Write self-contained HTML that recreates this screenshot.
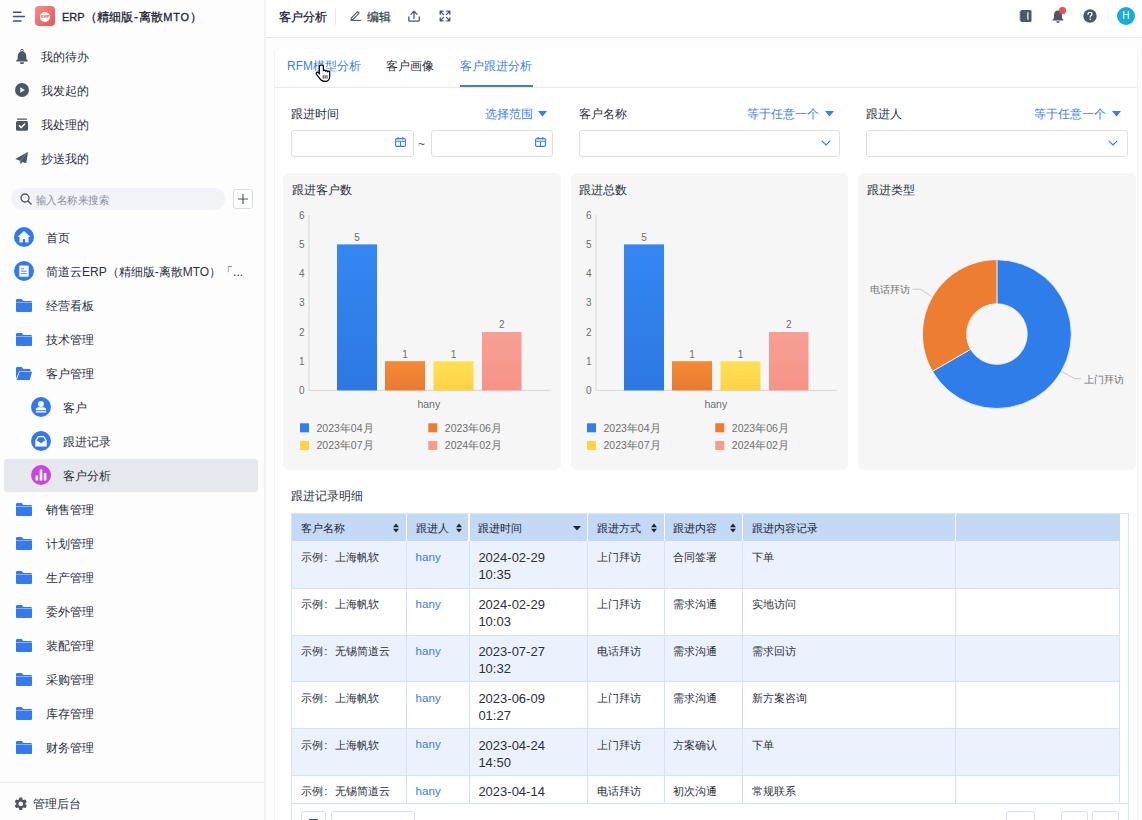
<!DOCTYPE html>
<html><head><meta charset="utf-8">
<style>
*{box-sizing:border-box;margin:0;padding:0}
html,body{width:1142px;height:820px;overflow:hidden;background:#fdfdfd;font-family:"Liberation Sans",sans-serif;color:#1f2329}
.abs{position:absolute}
.t{position:absolute;white-space:nowrap;line-height:14px}
#side{position:absolute;left:0;top:0;width:266px;height:820px;background:#fdfdfd;border-right:2px solid #f2f2f4}
.tx{position:absolute;font-size:12px;line-height:14px;color:#2b303b;white-space:nowrap}
#top{position:absolute;left:266px;top:0;width:876px;height:38px;background:#fff;border-bottom:1px solid #e9e9ec}
#main{position:absolute;left:265px;top:38px;width:877px;height:782px;background:#f7f8fa}

</style></head><body>
<div id="side"></div>
<svg class="abs" style="left:12px;top:11px" width="14" height="12" viewBox="0 0 14 12"><g stroke="#4a5060" stroke-width="1.5" stroke-linecap="round"><line x1="1.5" y1="1.3" x2="9" y2="1.3"/><line x1="1.5" y1="5.6" x2="12.3" y2="5.6"/><line x1="1.5" y1="10" x2="9" y2="10"/></g></svg>
<div class="abs" style="left:35px;top:6px;width:20px;height:20px;border-radius:4px;background:linear-gradient(135deg,#f38d8d,#e55656)"></div>
<div class="abs" style="left:40px;top:11.5px;width:10px;height:10px;border-radius:50%;background:#fff"></div>
<div class="abs" style="left:41.3px;top:14.5px;font-size:4px;line-height:4px;color:#e55;font-weight:bold">ERP</div>
<div class="t" style="left:62px;top:9px;font-size:12.2px;line-height:16px;color:#1f2633;-webkit-text-stroke:.3px #1f2633"><span style="font-size:11px">ERP</span>（精细版<span style="margin:0 1.25px">-</span>离散<span style="font-size:11px;letter-spacing:.8px">MTO</span>）</div>
<svg class="abs" style="left:16px;top:49px" width="12" height="15" viewBox="0 0 12 15"><circle cx="6" cy="1.6" r="1.3" fill="none" stroke="#4e5564" stroke-width="1"/><path d="M6 2.6c-2.6 0-4.3 2-4.3 4.6v3L.2 11.5c-.3.4 0 .9.5.9h10.6c.5 0 .8-.5.5-.9L10.3 10.2v-3C10.3 4.6 8.6 2.6 6 2.6z" fill="#4e5564"/><path d="M4 13.2a2 2 0 0 0 4 0z" fill="#4e5564"/></svg>
<div class="tx" style="left:41px;top:49.5px">我的待办</div>
<svg class="abs" style="left:15px;top:83px" width="14" height="14" viewBox="0 0 14 14"><circle cx="7" cy="7" r="7" fill="#4e5564"/><path d="M5.3 4.2v5.6l4.5-2.8z" fill="#fff"/></svg>
<div class="tx" style="left:41px;top:83.5px">我发起的</div>
<svg class="abs" style="left:16px;top:118px" width="12" height="13" viewBox="0 0 12 13"><rect x="1" y="0.5" width="10" height="1.2" rx=".5" fill="#4e5564"/><rect x="0" y="3" width="12" height="9.8" rx="1.6" fill="#4e5564"/><path d="M3.4 7.8l1.9 1.8 3.4-3.5" fill="none" stroke="#fff" stroke-width="1.5" stroke-linecap="round" stroke-linejoin="round"/></svg>
<div class="tx" style="left:41px;top:117.5px">我处理的</div>
<svg class="abs" style="left:15px;top:151px" width="14" height="14" viewBox="0 0 14 14"><path d="M13.1.8L.3 8.1l4.3 1.4.9 4.1 1.8-2.7 3.9 1.4z" fill="#4e5564"/><path d="M13.1.8L5.4 9.8l.1 3.6" fill="none" stroke="#fff" stroke-width=".5" opacity=".55"/></svg>
<div class="tx" style="left:41px;top:151.5px">抄送我的</div>
<div class="abs" style="left:11px;top:188px;width:214px;height:22px;border-radius:11px;background:#f1f3f7"></div>
<svg class="abs" style="left:20px;top:193px" width="12" height="12" viewBox="0 0 12 12"><circle cx="5" cy="5" r="4" fill="none" stroke="#4e5564" stroke-width="1.3"/><path d="M8 8l3 3" stroke="#4e5564" stroke-width="1.4" stroke-linecap="round"/></svg>
<div class="tx" style="left:36px;top:192.5px;font-size:11px;color:#8c919b;transform:scaleX(.95);transform-origin:0 0">输入名称来搜索</div>
<div class="abs" style="left:233px;top:189px;width:20px;height:20px;border:1px solid #d9dce2;border-radius:3px;background:#fff"></div>
<svg class="abs" style="left:237px;top:193px" width="12" height="12" viewBox="0 0 12 12"><path d="M6 1v10M1 6h10" stroke="#4e5564" stroke-width="1.2"/></svg>
<svg class="abs" style="left:14px;top:227px" width="20" height="20" viewBox="0 0 20 20"><circle cx="10" cy="10" r="10" fill="#3478f0"/><path d="M10 4L3.6 9.8h1.9v5.6h3.3v-3.4h2.4v3.4h3.3V9.8h1.9z" fill="#fff"/></svg>
<div class="tx" style="left:46px;top:230.5px">首页</div>
<svg class="abs" style="left:14px;top:261px" width="20" height="20" viewBox="0 0 20 20"><circle cx="10" cy="10" r="10" fill="#3478f0"/><rect x="5.3" y="4.6" width="9.4" height="11.2" rx="1" fill="#fff"/><path d="M7.2 7.8h3M7.2 10.2h5.4M7.2 12.6h5.4" stroke="#3478f0" stroke-width=".9"/></svg>
<div class="tx" style="left:46px;top:264.5px">简道云ERP（精细版-离散MTO）「...</div>
<svg class="abs" style="left:16px;top:299px" width="16" height="13" viewBox="0 0 16 13"><path d="M1.3 0h4.4l1.7 1.9h7.3c.7 0 1.3.6 1.3 1.3v8.5c0 .7-.6 1.3-1.3 1.3H1.3C.6 13 0 12.4 0 11.7V1.3C0 .6.6 0 1.3 0z" fill="#3479ee"/><path d="M0 3.5h16" stroke="#fff" stroke-width=".6" opacity=".7"/></svg>
<div class="tx" style="left:46px;top:298.5px">经营看板</div>
<svg class="abs" style="left:16px;top:333px" width="16" height="13" viewBox="0 0 16 13"><path d="M1.3 0h4.4l1.7 1.9h7.3c.7 0 1.3.6 1.3 1.3v8.5c0 .7-.6 1.3-1.3 1.3H1.3C.6 13 0 12.4 0 11.7V1.3C0 .6.6 0 1.3 0z" fill="#3479ee"/><path d="M0 3.5h16" stroke="#fff" stroke-width=".6" opacity=".7"/></svg>
<div class="tx" style="left:46px;top:332.5px">技术管理</div>
<svg class="abs" style="left:16px;top:367px" width="16" height="13" viewBox="0 0 16 13"><path d="M1.3 0h4.4l1.7 1.9h6c.7 0 1.3.6 1.3 1.3v1.1H3.3L0 11.8V1.3C0 .6.6 0 1.3 0z" fill="#3479ee"/><path d="M3.7 4.8H16L13.8 13H.6z" fill="#3479ee"/></svg>
<div class="tx" style="left:46px;top:366.5px">客户管理</div>
<svg class="abs" style="left:16px;top:503px" width="16" height="13" viewBox="0 0 16 13"><path d="M1.3 0h4.4l1.7 1.9h7.3c.7 0 1.3.6 1.3 1.3v8.5c0 .7-.6 1.3-1.3 1.3H1.3C.6 13 0 12.4 0 11.7V1.3C0 .6.6 0 1.3 0z" fill="#3479ee"/><path d="M0 3.5h16" stroke="#fff" stroke-width=".6" opacity=".7"/></svg>
<div class="tx" style="left:46px;top:502.5px">销售管理</div>
<svg class="abs" style="left:16px;top:537px" width="16" height="13" viewBox="0 0 16 13"><path d="M1.3 0h4.4l1.7 1.9h7.3c.7 0 1.3.6 1.3 1.3v8.5c0 .7-.6 1.3-1.3 1.3H1.3C.6 13 0 12.4 0 11.7V1.3C0 .6.6 0 1.3 0z" fill="#3479ee"/><path d="M0 3.5h16" stroke="#fff" stroke-width=".6" opacity=".7"/></svg>
<div class="tx" style="left:46px;top:536.5px">计划管理</div>
<svg class="abs" style="left:16px;top:571px" width="16" height="13" viewBox="0 0 16 13"><path d="M1.3 0h4.4l1.7 1.9h7.3c.7 0 1.3.6 1.3 1.3v8.5c0 .7-.6 1.3-1.3 1.3H1.3C.6 13 0 12.4 0 11.7V1.3C0 .6.6 0 1.3 0z" fill="#3479ee"/><path d="M0 3.5h16" stroke="#fff" stroke-width=".6" opacity=".7"/></svg>
<div class="tx" style="left:46px;top:570.5px">生产管理</div>
<svg class="abs" style="left:16px;top:605px" width="16" height="13" viewBox="0 0 16 13"><path d="M1.3 0h4.4l1.7 1.9h7.3c.7 0 1.3.6 1.3 1.3v8.5c0 .7-.6 1.3-1.3 1.3H1.3C.6 13 0 12.4 0 11.7V1.3C0 .6.6 0 1.3 0z" fill="#3479ee"/><path d="M0 3.5h16" stroke="#fff" stroke-width=".6" opacity=".7"/></svg>
<div class="tx" style="left:46px;top:604.5px">委外管理</div>
<svg class="abs" style="left:16px;top:639px" width="16" height="13" viewBox="0 0 16 13"><path d="M1.3 0h4.4l1.7 1.9h7.3c.7 0 1.3.6 1.3 1.3v8.5c0 .7-.6 1.3-1.3 1.3H1.3C.6 13 0 12.4 0 11.7V1.3C0 .6.6 0 1.3 0z" fill="#3479ee"/><path d="M0 3.5h16" stroke="#fff" stroke-width=".6" opacity=".7"/></svg>
<div class="tx" style="left:46px;top:638.5px">装配管理</div>
<svg class="abs" style="left:16px;top:673px" width="16" height="13" viewBox="0 0 16 13"><path d="M1.3 0h4.4l1.7 1.9h7.3c.7 0 1.3.6 1.3 1.3v8.5c0 .7-.6 1.3-1.3 1.3H1.3C.6 13 0 12.4 0 11.7V1.3C0 .6.6 0 1.3 0z" fill="#3479ee"/><path d="M0 3.5h16" stroke="#fff" stroke-width=".6" opacity=".7"/></svg>
<div class="tx" style="left:46px;top:672.5px">采购管理</div>
<svg class="abs" style="left:16px;top:707px" width="16" height="13" viewBox="0 0 16 13"><path d="M1.3 0h4.4l1.7 1.9h7.3c.7 0 1.3.6 1.3 1.3v8.5c0 .7-.6 1.3-1.3 1.3H1.3C.6 13 0 12.4 0 11.7V1.3C0 .6.6 0 1.3 0z" fill="#3479ee"/><path d="M0 3.5h16" stroke="#fff" stroke-width=".6" opacity=".7"/></svg>
<div class="tx" style="left:46px;top:706.5px">库存管理</div>
<svg class="abs" style="left:16px;top:741px" width="16" height="13" viewBox="0 0 16 13"><path d="M1.3 0h4.4l1.7 1.9h7.3c.7 0 1.3.6 1.3 1.3v8.5c0 .7-.6 1.3-1.3 1.3H1.3C.6 13 0 12.4 0 11.7V1.3C0 .6.6 0 1.3 0z" fill="#3479ee"/><path d="M0 3.5h16" stroke="#fff" stroke-width=".6" opacity=".7"/></svg>
<div class="tx" style="left:46px;top:740.5px">财务管理</div>
<div class="abs" style="left:4px;top:459px;width:254px;height:33px;border-radius:3px;background:#e7e8ed"></div>
<svg class="abs" style="left:31px;top:397px" width="20" height="20" viewBox="0 0 20 20"><circle cx="10" cy="10" r="10" fill="#3478f0"/><circle cx="10" cy="7" r="2.9" fill="#fff"/><path d="M4.8 13.2c0-2 1.3-2.9 2.9-2.9h4.6c1.6 0 2.9.9 2.9 2.9z" fill="#fff"/><rect x="4.8" y="14.2" width="10.4" height="1.3" fill="#fff"/></svg>
<div class="tx" style="left:62.5px;top:400.5px">客户</div>
<svg class="abs" style="left:31px;top:431.3px" width="20" height="20" viewBox="0 0 20 20"><circle cx="10" cy="10" r="10" fill="#3478f0"/><path d="M4.3 8.6L10 12.3l5.7-3.7v6.9H4.3z" fill="#fff"/><path d="M5.2 9.1L7.3 5.6h5.4l2.1 3.5" fill="none" stroke="#fff" stroke-width="1.1" stroke-linejoin="round"/></svg>
<div class="tx" style="left:62.5px;top:434.5px">跟进记录</div>
<svg class="abs" style="left:31px;top:465px" width="20" height="20" viewBox="0 0 20 20"><circle cx="10" cy="10" r="10" fill="#c846df"/><rect x="4.6" y="10.6" width="2.6" height="4.8" rx=".5" fill="#fff"/><rect x="8.7" y="4.6" width="2.6" height="10.8" rx=".5" fill="#fff"/><rect x="12.8" y="8" width="2.6" height="7.4" rx=".5" fill="#fff"/></svg>
<div class="tx" style="left:62.5px;top:468.5px">客户分析</div>
<div class="abs" style="left:0;top:782px;width:264px;height:1px;background:#eeeef1"></div>
<svg class="abs" style="left:13.2px;top:796.2px" width="15.5" height="15.5" viewBox="0 0 24 24"><path fill="#4e5564" d="M19.14 12.94c.04-.3.06-.61.06-.94 0-.32-.02-.64-.07-.94l2.03-1.58a.49.49 0 0 0 .12-.61l-1.92-3.32a.488.488 0 0 0-.59-.22l-2.39.96c-.5-.38-1.03-.7-1.62-.94l-.36-2.54a.484.484 0 0 0-.48-.41h-3.840c-.24 0-.43.17-.47.41l-.36 2.54c-.59.24-1.13.57-1.62.94l-2.39-.96c-.22-.08-.47 0-.59.22L2.74 8.87c-.12.21-.08.47.12.61l2.03 1.58c-.05.3-.09.63-.09.94s.02.64.07.94l-2.03 1.58a.49.49 0 0 0-.12.61l1.92 3.32c.12.22.37.29.59.22l2.39-.96c.5.38 1.03.7 1.62.94l.36 2.54c.05.24.24.41.48.41h3.84c.24 0 .44-.17.47-.41l.36-2.54c.59-.24 1.130-.56 1.62-.94l2.39.96c.22.08.47 0 .59-.22l1.92-3.32c.12-.22.07-.47-.12-.61l-2.01-1.58zM12 15.6c-1.98 0-3.6-1.62-3.6-3.6s1.62-3.6 3.6-3.6 3.6 1.62 3.6 3.6-1.62 3.6-3.6 3.6z"/></svg>
<div class="tx" style="left:33px;top:796.5px">管理后台</div><div id="top"></div>
<div class="t" style="left:279px;top:9.5px;font-size:12px;line-height:14px;color:#1f2633;-webkit-text-stroke:.3px #1f2633">客户分析</div>
<div class="abs" style="left:335px;top:8px;width:1px;height:17px;background:#e8e9ec"></div>
<svg class="abs" style="left:350px;top:10px" width="12" height="11" viewBox="0 0 12 11"><path d="M1.2 8.2L7.6 1.6l1.6 1.6-6.4 6.5H1.2z" fill="none" stroke="#4e5564" stroke-width="1.1" stroke-linejoin="round"/><path d="M.6 10.4h10.6" stroke="#4e5564" stroke-width="1.1"/></svg>
<div class="t" style="left:367px;top:9.5px;font-size:12px;line-height:14px;color:#2b303b;-webkit-text-stroke:.15px #2b303b">编辑</div>
<svg class="abs" style="left:408px;top:9.5px" width="12" height="12" viewBox="0 0 12 12"><path d="M6 8.6V1.4M2.9 4.4L6 1.2l3.1 3.2M.8 6.8v3.8c0 .3.2.5.5.5h9.4c.3 0 .5-.2.5-.5V6.8" fill="none" stroke="#4e5564" stroke-width="1.25" stroke-linecap="round" stroke-linejoin="round"/></svg>
<svg class="abs" style="left:438.5px;top:9.5px" width="12" height="12" viewBox="0 0 12 12"><path d="M1.2 4.2V1.2h3M1.2 1.2l3.4 3.4M7.8 1.2h3v3M10.8 1.2L7.4 4.6M10.8 7.8v3h-3M10.8 10.8L7.4 7.4M4.2 10.8h-3v-3M1.2 10.8l3.4-3.4" fill="none" stroke="#4e5564" stroke-width="1.3" stroke-linecap="round" stroke-linejoin="round"/></svg>
<svg class="abs" style="left:1019px;top:10px" width="13" height="12" viewBox="0 0 13 12"><rect x="1.3" y="0" width="11.2" height="12" rx="1.6" fill="#4e5564"/><path d="M.4 2.6h1.6M.4 4.8h1.6M.4 7h1.6M.4 9.2h1.6" stroke="#4e5564" stroke-width=".9"/><rect x="8.3" y="2.3" width="1.2" height="7.4" fill="#fff"/></svg>
<svg class="abs" style="left:1052px;top:9px" width="12" height="14" viewBox="0 0 12 14"><path d="M6 1.4c-2.5 0-4 1.9-4 4.4v3.3L.6 10.8c-.2.4 0 .7.4.7h10c.4 0 .6-.3.4-.7L10 9.1V5.8C10 3.3 8.5 1.4 6 1.4z" fill="#4e5564"/><path d="M4.3 12.2a1.7 1.7 0 0 0 3.4 0z" fill="#4e5564"/></svg>
<div class="abs" style="left:1059px;top:7px;width:6.6px;height:6.6px;border-radius:50%;background:#ea4f4f"></div>
<svg class="abs" style="left:1083px;top:9px" width="14" height="14" viewBox="0 0 14 14"><circle cx="7" cy="7" r="6.7" fill="#4e5564"/><path d="M5 5.3c0-1.1.9-1.9 2-1.9s2 .8 2 1.8c0 1.3-1.8 1.5-1.8 2.7" fill="none" stroke="#fff" stroke-width="1.3" stroke-linecap="round"/><circle cx="7.2" cy="10.2" r=".8" fill="#fff"/></svg>
<div class="abs" style="left:1116.5px;top:6.8px;width:18.6px;height:18.6px;border-radius:50%;background:#17acd6"></div>
<div class="t" style="left:1116.5px;top:10px;width:18.6px;text-align:center;font-size:10px;line-height:12px;color:#fff">H</div><div class="abs" style="left:273.5px;top:50px;width:864.5px;height:790px;background:#fff;border-left:1px solid #f1f1f7;border-right:1px solid #f1f1f7"></div>
<div class="t" style="left:287px;top:59px;font-size:12px;line-height:14px;color:#3d7fe3">RFM模型分析</div>
<div class="t" style="left:386px;top:59px;font-size:12px;line-height:14px;color:#2b303b">客户画像</div>
<div class="t" style="left:460px;top:59px;font-size:12px;line-height:14px;color:#3d7fe3">客户跟进分析</div>
<div class="abs" style="left:460px;top:84.5px;width:73px;height:2.3px;background:#3a7de6"></div>
<div class="abs" style="left:275px;top:87px;width:862px;height:1px;background:#e8e9ed"></div>
<svg class="abs" style="left:314.5px;top:63.5px" width="18" height="19" viewBox="0 0 18 19"><path d="M5.6 1.2c-.8 0-1.3.6-1.3 1.3v7.1l-.9-.9c-.6-.7-1.5-.7-2-.1-.4.5-.3 1.2.1 1.7l3.1 4c1 1.4 2.3 3.1 5.1 3.1h.5c2.6 0 4.5-2 4.5-4.6V8.4c0-.7-.5-1.2-1.2-1.2-.4 0-.7.2-.9.4-.1-.6-.6-1-1.2-1-.4 0-.8.2-1 .4-.2-.5-.6-.9-1.1-.9-.3 0-.6.1-.9.3V2.5c0-.7-.6-1.3-1.3-1.3z" fill="#fff" stroke="#000" stroke-width="1.2"/><path d="M8.2 11.2v3.4M10.1 11.2v3.4M12 11.2v3.4" stroke="#000" stroke-width=".8"/></svg>
<div class="t" style="left:291px;top:106.5px;font-size:12px;line-height:14px;color:#2b303b">跟进时间</div>
<div class="t" style="left:484.5px;top:106.5px;font-size:12px;line-height:14px;color:#3d7fe3">选择范围</div>
<svg class="abs" style="left:538px;top:110.5px" width="9" height="6" viewBox="0 0 9 6"><path d="M0 0h9L4.5 5.5z" fill="#3a7de6"/></svg>
<div class="t" style="left:578.5px;top:106.5px;font-size:12px;line-height:14px;color:#2b303b">客户名称</div>
<div class="t" style="left:747px;top:106.5px;font-size:12px;line-height:14px;color:#3d7fe3">等于任意一个</div>
<svg class="abs" style="left:825px;top:110.5px" width="9" height="6" viewBox="0 0 9 6"><path d="M0 0h9L4.5 5.5z" fill="#3a7de6"/></svg>
<div class="t" style="left:866px;top:106.5px;font-size:12px;line-height:14px;color:#2b303b">跟进人</div>
<div class="t" style="left:1034px;top:106.5px;font-size:12px;line-height:14px;color:#3d7fe3">等于任意一个</div>
<svg class="abs" style="left:1112px;top:110.5px" width="9" height="6" viewBox="0 0 9 6"><path d="M0 0h9L4.5 5.5z" fill="#3a7de6"/></svg>
<div class="abs" style="left:291px;top:130px;width:122.5px;height:27px;border:1px solid #dedfe3;border-radius:3px;background:#fff"></div>
<svg class="abs" style="left:395px;top:137px" width="11" height="10" viewBox="0 0 11 10"><rect x=".6" y="1.6" width="9.8" height="7.8" rx="1.2" fill="none" stroke="#3a7de6" stroke-width="1.1"/><path d="M.6 4.3h9.8M5.5 4.3v5M3.2 0v2.6M7.8 0v2.6" stroke="#3a7de6" stroke-width="1.1"/></svg>
<div class="t" style="left:418px;top:137px;font-size:12px;line-height:14px;color:#555">~</div>
<div class="abs" style="left:430.5px;top:130px;width:122.5px;height:27px;border:1px solid #dedfe3;border-radius:3px;background:#fff"></div>
<svg class="abs" style="left:535px;top:137px" width="11" height="10" viewBox="0 0 11 10"><rect x=".6" y="1.6" width="9.8" height="7.8" rx="1.2" fill="none" stroke="#3a7de6" stroke-width="1.1"/><path d="M.6 4.3h9.8M5.5 4.3v5M3.2 0v2.6M7.8 0v2.6" stroke="#3a7de6" stroke-width="1.1"/></svg>
<div class="abs" style="left:578.5px;top:130px;width:261.5px;height:27px;border:1px solid #dedfe3;border-radius:3px;background:#fff"></div>
<svg class="abs" style="left:820.5px;top:140px" width="10" height="6" viewBox="0 0 10 6"><path d="M.8.8L5 5 9.2.8" fill="none" stroke="#3a7de6" stroke-width="1.2"/></svg>
<div class="abs" style="left:866px;top:130px;width:261.5px;height:27px;border:1px solid #dedfe3;border-radius:3px;background:#fff"></div>
<svg class="abs" style="left:1107.5px;top:140px" width="10" height="6" viewBox="0 0 10 6"><path d="M.8.8L5 5 9.2.8" fill="none" stroke="#3a7de6" stroke-width="1.2"/></svg><div class="abs" style="left:283px;top:173px;width:278px;height:297px;border-radius:6px;background:#f6f6f6"></div><div class="t" style="left:291.5px;top:183px;font-size:12px;line-height:14px;color:#2b303b">跟进客户数</div>
<svg class="abs" style="left:283px;top:173px" width="278" height="297" viewBox="283 173 278 297"><path d="M309 215.2V390.4M308.5 390.4H550" stroke="#d6d6d6" stroke-width="1" fill="none"/><text x="304.6" y="394.0" text-anchor="end" font-size="10" font-family="Liberation Sans" fill="#6e6e6e">0</text><text x="304.6" y="364.8" text-anchor="end" font-size="10" font-family="Liberation Sans" fill="#6e6e6e">1</text><text x="304.6" y="335.6" text-anchor="end" font-size="10" font-family="Liberation Sans" fill="#6e6e6e">2</text><text x="304.6" y="306.4" text-anchor="end" font-size="10" font-family="Liberation Sans" fill="#6e6e6e">3</text><text x="304.6" y="277.2" text-anchor="end" font-size="10" font-family="Liberation Sans" fill="#6e6e6e">4</text><text x="304.6" y="248.0" text-anchor="end" font-size="10" font-family="Liberation Sans" fill="#6e6e6e">5</text><text x="304.6" y="218.8" text-anchor="end" font-size="10" font-family="Liberation Sans" fill="#6e6e6e">6</text><defs><linearGradient id="g0_0" x1="0" y1="0" x2="0" y2="1"><stop offset="0" stop-color="#3487f2"/><stop offset="1" stop-color="#2d78e2"/></linearGradient><linearGradient id="g0_1" x1="0" y1="0" x2="0" y2="1"><stop offset="0" stop-color="#f58a37"/><stop offset="1" stop-color="#e87a2f"/></linearGradient><linearGradient id="g0_2" x1="0" y1="0" x2="0" y2="1"><stop offset="0" stop-color="#ffe152"/><stop offset="1" stop-color="#fdd246"/></linearGradient><linearGradient id="g0_3" x1="0" y1="0" x2="0" y2="1"><stop offset="0" stop-color="#f99f93"/><stop offset="1" stop-color="#f69388"/></linearGradient></defs><rect x="337" y="244.4" width="40" height="146.0" fill="url(#g0_0)"/><text x="357.0" y="240.8" text-anchor="middle" font-size="10" font-family="Liberation Sans" fill="#6e6e6e">5</text><rect x="385" y="361.2" width="40" height="29.2" fill="url(#g0_1)"/><text x="405.0" y="357.6" text-anchor="middle" font-size="10" font-family="Liberation Sans" fill="#6e6e6e">1</text><rect x="433.5" y="361.2" width="40" height="29.2" fill="url(#g0_2)"/><text x="453.5" y="357.6" text-anchor="middle" font-size="10" font-family="Liberation Sans" fill="#6e6e6e">1</text><rect x="482" y="332.0" width="39.5" height="58.4" fill="url(#g0_3)"/><text x="501.8" y="328.4" text-anchor="middle" font-size="10" font-family="Liberation Sans" fill="#6e6e6e">2</text><text x="428.8" y="408" text-anchor="middle" font-size="10.5" font-family="Liberation Sans" fill="#6e6e6e">hany</text><rect x="300" y="423.3" width="9" height="9" fill="#2f80ee"/><text x="316.5" y="431.5" font-size="10.5" font-family="Liberation Sans" fill="#6e6e6e">2023年04月</text><rect x="428.3" y="423.3" width="9" height="9" fill="#ec7c30"/><text x="444.8" y="431.5" font-size="10.5" font-family="Liberation Sans" fill="#6e6e6e">2023年06月</text><rect x="300" y="441" width="9" height="9" fill="#fdd444"/><text x="316.5" y="449.2" font-size="10.5" font-family="Liberation Sans" fill="#6e6e6e">2023年07月</text><rect x="428.3" y="441" width="9" height="9" fill="#f99b8f"/><text x="444.8" y="449.2" font-size="10.5" font-family="Liberation Sans" fill="#6e6e6e">2024年02月</text></svg>
<div class="abs" style="left:570.5px;top:173px;width:277.5px;height:297px;border-radius:6px;background:#f6f6f6"></div><div class="t" style="left:579.0px;top:183px;font-size:12px;line-height:14px;color:#2b303b">跟进总数</div>
<svg class="abs" style="left:570.3px;top:173px" width="278" height="297" viewBox="283 173 278 297"><path d="M309 215.2V390.4M308.5 390.4H550" stroke="#d6d6d6" stroke-width="1" fill="none"/><text x="304.6" y="394.0" text-anchor="end" font-size="10" font-family="Liberation Sans" fill="#6e6e6e">0</text><text x="304.6" y="364.8" text-anchor="end" font-size="10" font-family="Liberation Sans" fill="#6e6e6e">1</text><text x="304.6" y="335.6" text-anchor="end" font-size="10" font-family="Liberation Sans" fill="#6e6e6e">2</text><text x="304.6" y="306.4" text-anchor="end" font-size="10" font-family="Liberation Sans" fill="#6e6e6e">3</text><text x="304.6" y="277.2" text-anchor="end" font-size="10" font-family="Liberation Sans" fill="#6e6e6e">4</text><text x="304.6" y="248.0" text-anchor="end" font-size="10" font-family="Liberation Sans" fill="#6e6e6e">5</text><text x="304.6" y="218.8" text-anchor="end" font-size="10" font-family="Liberation Sans" fill="#6e6e6e">6</text><defs><linearGradient id="g287_0" x1="0" y1="0" x2="0" y2="1"><stop offset="0" stop-color="#3487f2"/><stop offset="1" stop-color="#2d78e2"/></linearGradient><linearGradient id="g287_1" x1="0" y1="0" x2="0" y2="1"><stop offset="0" stop-color="#f58a37"/><stop offset="1" stop-color="#e87a2f"/></linearGradient><linearGradient id="g287_2" x1="0" y1="0" x2="0" y2="1"><stop offset="0" stop-color="#ffe152"/><stop offset="1" stop-color="#fdd246"/></linearGradient><linearGradient id="g287_3" x1="0" y1="0" x2="0" y2="1"><stop offset="0" stop-color="#f99f93"/><stop offset="1" stop-color="#f69388"/></linearGradient></defs><rect x="337" y="244.4" width="40" height="146.0" fill="url(#g287_0)"/><text x="357.0" y="240.8" text-anchor="middle" font-size="10" font-family="Liberation Sans" fill="#6e6e6e">5</text><rect x="385" y="361.2" width="40" height="29.2" fill="url(#g287_1)"/><text x="405.0" y="357.6" text-anchor="middle" font-size="10" font-family="Liberation Sans" fill="#6e6e6e">1</text><rect x="433.5" y="361.2" width="40" height="29.2" fill="url(#g287_2)"/><text x="453.5" y="357.6" text-anchor="middle" font-size="10" font-family="Liberation Sans" fill="#6e6e6e">1</text><rect x="482" y="332.0" width="39.5" height="58.4" fill="url(#g287_3)"/><text x="501.8" y="328.4" text-anchor="middle" font-size="10" font-family="Liberation Sans" fill="#6e6e6e">2</text><text x="428.8" y="408" text-anchor="middle" font-size="10.5" font-family="Liberation Sans" fill="#6e6e6e">hany</text><rect x="300" y="423.3" width="9" height="9" fill="#2f80ee"/><text x="316.5" y="431.5" font-size="10.5" font-family="Liberation Sans" fill="#6e6e6e">2023年04月</text><rect x="428.3" y="423.3" width="9" height="9" fill="#ec7c30"/><text x="444.8" y="431.5" font-size="10.5" font-family="Liberation Sans" fill="#6e6e6e">2023年06月</text><rect x="300" y="441" width="9" height="9" fill="#fdd444"/><text x="316.5" y="449.2" font-size="10.5" font-family="Liberation Sans" fill="#6e6e6e">2023年07月</text><rect x="428.3" y="441" width="9" height="9" fill="#f99b8f"/><text x="444.8" y="449.2" font-size="10.5" font-family="Liberation Sans" fill="#6e6e6e">2024年02月</text></svg>
<div class="abs" style="left:858px;top:173px;width:277.7px;height:297px;border-radius:6px;background:#f6f6f6"></div><div class="t" style="left:866.5px;top:183px;font-size:12px;line-height:14px;color:#2b303b">跟进类型</div>
<svg class="abs" style="left:858px;top:173px" width="278" height="297" viewBox="858 173 278 297"><path d="M996.90 259.70A74.4 74.4 0 1 1 932.47 371.30L970.66 349.25A30.3 30.3 0 1 0 996.90 303.80z" fill="#2f7deb" stroke="#f6f6f6" stroke-width=".8"/><path d="M932.47 371.30A74.4 74.4 0 0 1 996.90 259.70L996.90 303.80A30.3 30.3 0 0 0 970.66 349.25z" fill="#ec7d31" stroke="#f6f6f6" stroke-width=".8"/><path d="M912.5 289.2H920.5L931.6 296.6" fill="none" stroke="#c8c8c8" stroke-width="1"/><path d="M1062.3 371.8L1074.5 378.6H1081" fill="none" stroke="#c8c8c8" stroke-width="1"/><text x="869.8" y="293" font-size="10" font-family="Liberation Sans" fill="#6e6e6e">电话拜访</text><text x="1083.6" y="382.5" font-size="10" font-family="Liberation Sans" fill="#6e6e6e">上门拜访</text></svg><div class="t" style="left:291px;top:488.5px;font-size:12px;line-height:14px;color:#2b303b">跟进记录明细</div>
<div class="abs" style="left:291px;top:513px;width:837.5px;height:320px;border:1px solid #d6e4f9;background:#fff"></div>
<div class="abs" style="left:292px;top:514px;width:827.5px;height:27px;background:#c4d9f6"></div>
<div class="abs" style="left:405.75px;top:514px;width:1.5px;height:27px;background:#fff"></div>
<div class="abs" style="left:468.25px;top:514px;width:1.5px;height:27px;background:#fff"></div>
<div class="abs" style="left:586.75px;top:514px;width:1.5px;height:27px;background:#fff"></div>
<div class="abs" style="left:663.75px;top:514px;width:1.5px;height:27px;background:#fff"></div>
<div class="abs" style="left:741.75px;top:514px;width:1.5px;height:27px;background:#fff"></div>
<div class="abs" style="left:954.85px;top:514px;width:1.5px;height:27px;background:#fff"></div>
<div class="t" style="left:301px;top:520.6px;font-size:11.4px;line-height:14px;color:#1f2633">客户名称</div>
<svg class="abs" style="left:393px;top:523px" width="6" height="10" viewBox="0 0 6 10"><path d="M3 .5L6 4.2H0zM0 5.8h6L3 9.5z" fill="#1f2633"/></svg>
<div class="t" style="left:415.7px;top:520.6px;font-size:11.4px;line-height:14px;color:#1f2633">跟进人</div>
<svg class="abs" style="left:456px;top:523px" width="6" height="10" viewBox="0 0 6 10"><path d="M3 .5L6 4.2H0zM0 5.8h6L3 9.5z" fill="#1f2633"/></svg>
<div class="t" style="left:478.4px;top:520.6px;font-size:11.4px;line-height:14px;color:#1f2633">跟进时间</div>
<svg class="abs" style="left:573px;top:525.5px" width="8" height="5" viewBox="0 0 8 5"><path d="M0 0h8L4 4.6z" fill="#1f2633"/></svg>
<div class="t" style="left:596.6px;top:520.6px;font-size:11.4px;line-height:14px;color:#1f2633">跟进方式</div>
<svg class="abs" style="left:651.4px;top:523px" width="6" height="10" viewBox="0 0 6 10"><path d="M3 .5L6 4.2H0zM0 5.8h6L3 9.5z" fill="#1f2633"/></svg>
<div class="t" style="left:673.3px;top:520.6px;font-size:11.4px;line-height:14px;color:#1f2633">跟进内容</div>
<svg class="abs" style="left:730.2px;top:523px" width="6" height="10" viewBox="0 0 6 10"><path d="M3 .5L6 4.2H0zM0 5.8h6L3 9.5z" fill="#1f2633"/></svg>
<div class="t" style="left:752px;top:520.6px;font-size:11.4px;line-height:14px;color:#1f2633">跟进内容记录</div>
<div class="abs" style="left:292px;top:541.20px;width:827.5px;height:46.90px;background:#ebf2fd"></div>
<div class="abs" style="left:292px;top:588.10px;width:827.5px;height:46.90px;background:#fff"></div>
<div class="abs" style="left:292px;top:635.00px;width:827.5px;height:46.90px;background:#ebf2fd"></div>
<div class="abs" style="left:292px;top:681.90px;width:827.5px;height:46.90px;background:#fff"></div>
<div class="abs" style="left:292px;top:728.80px;width:827.5px;height:46.90px;background:#ebf2fd"></div>
<div class="abs" style="left:292px;top:775.70px;width:827.5px;height:27.80px;background:#fff"></div>
<div class="abs" style="left:292px;top:587.60px;width:827.5px;height:1px;background:#d3e2f8"></div>
<div class="abs" style="left:292px;top:634.50px;width:827.5px;height:1px;background:#d3e2f8"></div>
<div class="abs" style="left:292px;top:681.40px;width:827.5px;height:1px;background:#d3e2f8"></div>
<div class="abs" style="left:292px;top:728.30px;width:827.5px;height:1px;background:#d3e2f8"></div>
<div class="abs" style="left:292px;top:775.20px;width:827.5px;height:1px;background:#d3e2f8"></div>
<div class="abs" style="left:406.0px;top:541px;width:1px;height:262.5px;background:#d3e2f8"></div>
<div class="abs" style="left:468.5px;top:541px;width:1px;height:262.5px;background:#d3e2f8"></div>
<div class="abs" style="left:587.0px;top:541px;width:1px;height:262.5px;background:#d3e2f8"></div>
<div class="abs" style="left:664.0px;top:541px;width:1px;height:262.5px;background:#d3e2f8"></div>
<div class="abs" style="left:742.0px;top:541px;width:1px;height:262.5px;background:#d3e2f8"></div>
<div class="abs" style="left:955.1px;top:541px;width:1px;height:262.5px;background:#d3e2f8"></div>
<div class="abs" style="left:1119.0px;top:541px;width:1px;height:262.5px;background:#d3e2f8"></div>
<div class="abs" style="left:292px;top:803.3px;width:836px;height:1.2px;background:#d3e2f8"></div>
<div class="t" style="left:301px;top:550.4px;font-size:11.4px;line-height:14px;color:#2b303b">示例</div>
<div class="t" style="left:324.3px;top:550.4px;font-size:11.4px;line-height:14px;color:#2b303b">:</div>
<div class="t" style="left:334.5px;top:550.4px;font-size:11.4px;line-height:14px;color:#2b303b">上海帆软</div>
<div class="t" style="left:415.6px;top:550.1px;font-size:11.6px;line-height:14px;color:#3b7be2">hany</div>
<div class="t" style="left:478.4px;top:551.30px;font-size:13px;line-height:14px;color:#2b303b">2024-02-29</div>
<div class="t" style="left:478.4px;top:568.30px;font-size:13px;line-height:14px;color:#2b303b">10:35</div>
<div class="t" style="left:596.6px;top:550.4px;font-size:11.4px;line-height:14px;color:#2b303b">上门拜访</div>
<div class="t" style="left:673.3px;top:550.4px;font-size:11.4px;line-height:14px;color:#2b303b">合同签署</div>
<div class="t" style="left:752px;top:550.4px;font-size:11.4px;line-height:14px;color:#2b303b">下单</div>
<div class="t" style="left:301px;top:597.2px;font-size:11.4px;line-height:14px;color:#2b303b">示例</div>
<div class="t" style="left:324.3px;top:597.2px;font-size:11.4px;line-height:14px;color:#2b303b">:</div>
<div class="t" style="left:334.5px;top:597.2px;font-size:11.4px;line-height:14px;color:#2b303b">上海帆软</div>
<div class="t" style="left:415.6px;top:596.9000000000001px;font-size:11.6px;line-height:14px;color:#3b7be2">hany</div>
<div class="t" style="left:478.4px;top:598.10px;font-size:13px;line-height:14px;color:#2b303b">2024-02-29</div>
<div class="t" style="left:478.4px;top:615.10px;font-size:13px;line-height:14px;color:#2b303b">10:03</div>
<div class="t" style="left:596.6px;top:597.2px;font-size:11.4px;line-height:14px;color:#2b303b">上门拜访</div>
<div class="t" style="left:673.3px;top:597.2px;font-size:11.4px;line-height:14px;color:#2b303b">需求沟通</div>
<div class="t" style="left:752px;top:597.2px;font-size:11.4px;line-height:14px;color:#2b303b">实地访问</div>
<div class="t" style="left:301px;top:644.0px;font-size:11.4px;line-height:14px;color:#2b303b">示例</div>
<div class="t" style="left:324.3px;top:644.0px;font-size:11.4px;line-height:14px;color:#2b303b">:</div>
<div class="t" style="left:334.5px;top:644.0px;font-size:11.4px;line-height:14px;color:#2b303b">无锡简道云</div>
<div class="t" style="left:415.6px;top:643.7px;font-size:11.6px;line-height:14px;color:#3b7be2">hany</div>
<div class="t" style="left:478.4px;top:644.90px;font-size:13px;line-height:14px;color:#2b303b">2023-07-27</div>
<div class="t" style="left:478.4px;top:661.90px;font-size:13px;line-height:14px;color:#2b303b">10:32</div>
<div class="t" style="left:596.6px;top:644.0px;font-size:11.4px;line-height:14px;color:#2b303b">电话拜访</div>
<div class="t" style="left:673.3px;top:644.0px;font-size:11.4px;line-height:14px;color:#2b303b">需求沟通</div>
<div class="t" style="left:752px;top:644.0px;font-size:11.4px;line-height:14px;color:#2b303b">需求回访</div>
<div class="t" style="left:301px;top:690.8px;font-size:11.4px;line-height:14px;color:#2b303b">示例</div>
<div class="t" style="left:324.3px;top:690.8px;font-size:11.4px;line-height:14px;color:#2b303b">:</div>
<div class="t" style="left:334.5px;top:690.8px;font-size:11.4px;line-height:14px;color:#2b303b">上海帆软</div>
<div class="t" style="left:415.6px;top:690.5px;font-size:11.6px;line-height:14px;color:#3b7be2">hany</div>
<div class="t" style="left:478.4px;top:691.70px;font-size:13px;line-height:14px;color:#2b303b">2023-06-09</div>
<div class="t" style="left:478.4px;top:708.70px;font-size:13px;line-height:14px;color:#2b303b">01:27</div>
<div class="t" style="left:596.6px;top:690.8px;font-size:11.4px;line-height:14px;color:#2b303b">上门拜访</div>
<div class="t" style="left:673.3px;top:690.8px;font-size:11.4px;line-height:14px;color:#2b303b">需求沟通</div>
<div class="t" style="left:752px;top:690.8px;font-size:11.4px;line-height:14px;color:#2b303b">新方案咨询</div>
<div class="t" style="left:301px;top:737.6px;font-size:11.4px;line-height:14px;color:#2b303b">示例</div>
<div class="t" style="left:324.3px;top:737.6px;font-size:11.4px;line-height:14px;color:#2b303b">:</div>
<div class="t" style="left:334.5px;top:737.6px;font-size:11.4px;line-height:14px;color:#2b303b">上海帆软</div>
<div class="t" style="left:415.6px;top:737.3000000000001px;font-size:11.6px;line-height:14px;color:#3b7be2">hany</div>
<div class="t" style="left:478.4px;top:738.50px;font-size:13px;line-height:14px;color:#2b303b">2023-04-24</div>
<div class="t" style="left:478.4px;top:755.50px;font-size:13px;line-height:14px;color:#2b303b">14:50</div>
<div class="t" style="left:596.6px;top:737.6px;font-size:11.4px;line-height:14px;color:#2b303b">上门拜访</div>
<div class="t" style="left:673.3px;top:737.6px;font-size:11.4px;line-height:14px;color:#2b303b">方案确认</div>
<div class="t" style="left:752px;top:737.6px;font-size:11.4px;line-height:14px;color:#2b303b">下单</div>
<div class="t" style="left:301px;top:784.4px;font-size:11.4px;line-height:14px;color:#2b303b">示例</div>
<div class="t" style="left:324.3px;top:784.4px;font-size:11.4px;line-height:14px;color:#2b303b">:</div>
<div class="t" style="left:334.5px;top:784.4px;font-size:11.4px;line-height:14px;color:#2b303b">无锡简道云</div>
<div class="t" style="left:415.6px;top:784.1px;font-size:11.6px;line-height:14px;color:#3b7be2">hany</div>
<div class="t" style="left:478.4px;top:785.30px;font-size:13px;line-height:14px;color:#2b303b">2023-04-14</div>
<div class="t" style="left:596.6px;top:784.4px;font-size:11.4px;line-height:14px;color:#2b303b">电话拜访</div>
<div class="t" style="left:673.3px;top:784.4px;font-size:11.4px;line-height:14px;color:#2b303b">初次沟通</div>
<div class="t" style="left:752px;top:784.4px;font-size:11.4px;line-height:14px;color:#2b303b">常规联系</div>
<div class="abs" style="left:301px;top:811px;width:25px;height:24px;border:1px solid #d5e1f3;border-radius:3px;background:#fff"></div>
<div class="abs" style="left:331px;top:811px;width:84px;height:24px;border:1px solid #d5e1f3;border-radius:3px;background:#fff"></div>
<div class="abs" style="left:1006px;top:811px;width:29px;height:24px;border:1px solid #d5e1f3;border-radius:3px;background:#fff"></div>
<div class="abs" style="left:1061px;top:811px;width:27px;height:24px;border:1px solid #d5e1f3;border-radius:3px;background:#fff"></div>
<div class="abs" style="left:1091.5px;top:811px;width:27px;height:24px;border:1px solid #d5e1f3;border-radius:3px;background:#fff"></div>
<div class="abs" style="left:308.7px;top:819px;width:9px;height:2px;background:#4e5564"></div>
</body></html>
